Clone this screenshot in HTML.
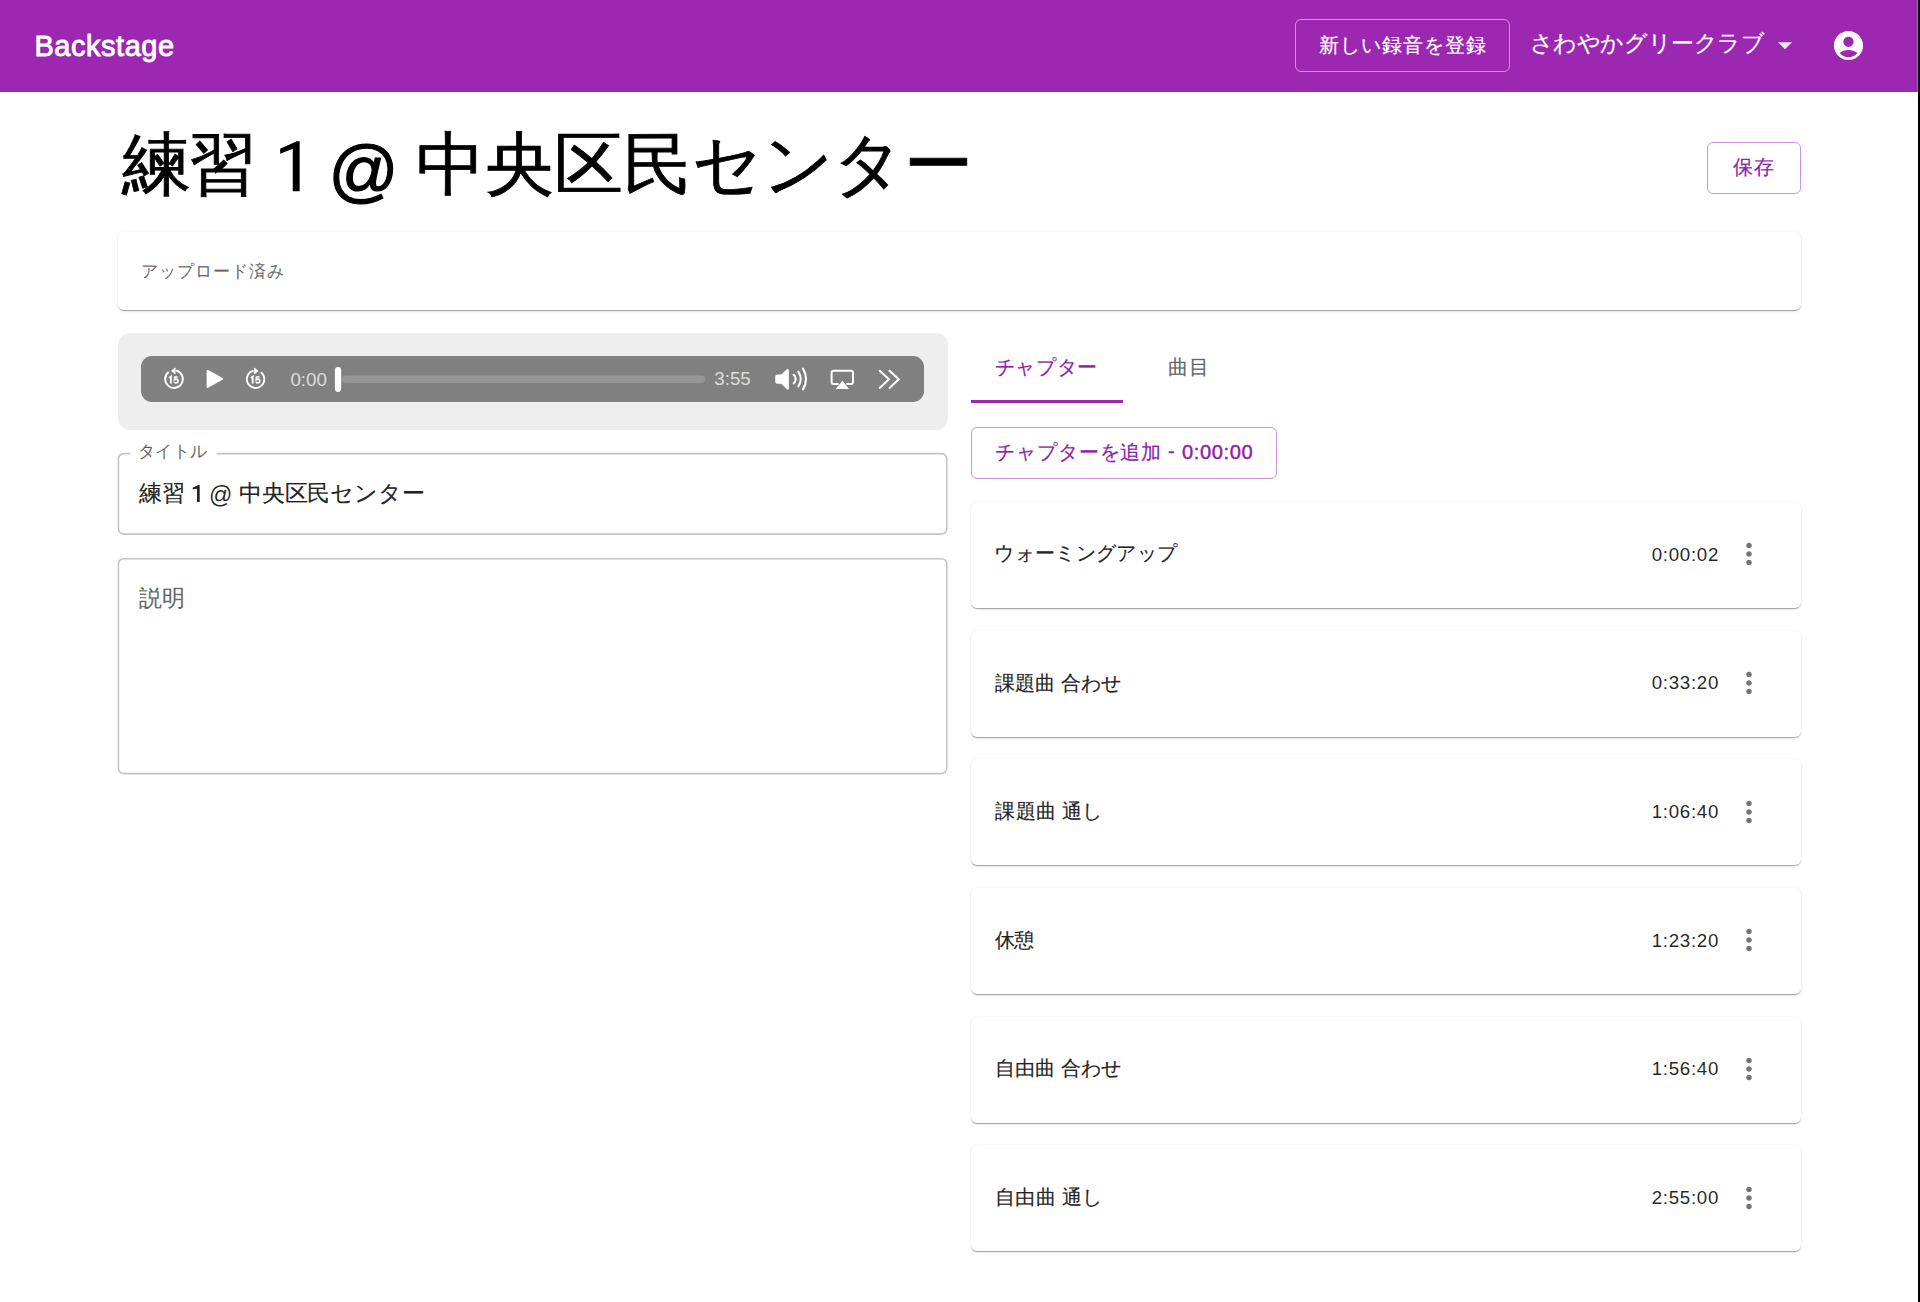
<!DOCTYPE html>
<html lang="ja">
<head>
<meta charset="utf-8">
<title>Backstage</title>
<style>
*{box-sizing:border-box;margin:0;padding:0}
html,body{width:1920px;height:1302px;overflow:hidden;background:#fff}
body{font-family:"Liberation Sans",sans-serif;color:rgba(0,0,0,0.87);position:relative}
.b{position:absolute}
.t{position:absolute;white-space:nowrap}
.paper{background:#fff;border-radius:6px;box-shadow:0px 2px 1px -1px rgba(0,0,0,0.2),0px 1px 1px 0px rgba(0,0,0,0.14),0px 1px 3px 0px rgba(0,0,0,0.12)}
.fld{border:2px solid #c4c4c4;border-radius:6.5px}
</style>
</head>
<body>
<div class="b" style="left:0;top:0;width:1920px;height:92px;background:#9c27b0"></div>
<div class="t" style="left:34.4px;top:23.55px;font-size:29px;line-height:44px;font-weight:400;letter-spacing:0.537px;color:#fff;-webkit-text-stroke:0.9px #fff">Backstage</div>
<div class="b" style="left:1295px;top:19px;width:215px;height:53px;border:1.4375px solid rgba(255,255,255,0.5);border-radius:6px"></div>
<div class="t" style="left:1318.5px;top:29.5px;font-size:20.125px;line-height:30px;font-weight:400;letter-spacing:1.071px;color:#fff;-webkit-text-stroke:0.2px #fff">新しい録音を登録</div>
<div class="t" style="left:1529.75px;top:26.27px;font-size:23px;line-height:34px;font-weight:400;letter-spacing:-0.45px;color:#fff;-webkit-text-stroke:0.2px #fff">さわやかグリークラブ</div>
<svg class="b" style="left:1768px;top:28px" width="34" height="34" viewBox="0 0 24 24"><path d="M7 10l5 5 5-5z" fill="#e6e6e6"/></svg>
<svg class="b" style="left:1831px;top:28px" width="35" height="35" viewBox="0 0 24 24"><path fill="#fff" d="M12 2C6.48 2 2 6.48 2 12s4.48 10 10 10 10-4.48 10-10S17.52 2 12 2zm0 4c1.93 0 3.5 1.57 3.5 3.5S13.93 13 12 13s-3.5-1.57-3.5-3.5S10.07 6 12 6zm0 14c-2.03 0-4.430-.82-6.14-2.88C7.55 15.8 9.68 15 12 15s4.45.8 6.14 2.12C16.43 19.18 14.03 20 12 20z"/></svg>
<div class="b" style="left:1917px;top:0;width:1px;height:92px;background:#b555c6"></div>
<div class="b" style="left:1918px;top:0;width:2px;height:1302px;background:#000"></div>
<div class="t" style="left:121.9px;top:112.9px;font-size:69px;line-height:104px;font-weight:400;letter-spacing:-2.4px;color:#000;-webkit-text-stroke:0.8px #000">練習</div>
<div class="t" style="left:328.5px;top:119.35px;font-size:69px;line-height:104px;font-weight:400;letter-spacing:0.0px;color:#000;-webkit-text-stroke:1.2px #000">@</div>
<div class="t" style="left:416.3px;top:112.6px;font-size:69px;line-height:104px;font-weight:400;letter-spacing:-0.157px;color:#000;-webkit-text-stroke:0.8px #000">中央区民センター</div>
<svg class="b" style="left:0;top:0" width="1920" height="600"><path fill="#000" d="M299.65 141.2 L299.65 191.27 L292.77 191.27 L292.77 148.65 L280.16 153.8 L280.16 148.65 L296.8 141.2 Z"/><path fill="rgba(0,0,0,0.87)" d="M199.69 485 L199.69 501.875 L197.03 501.875 L197.03 488.75 L192.66 489.2 L192.66 487.66 L198.44 485 Z"/></svg>
<div class="b" style="left:1707px;top:142px;width:94px;height:52px;border:1.4375px solid rgba(156,39,176,0.5);border-radius:6px"></div>
<div class="t" style="left:1733.3px;top:151.9px;font-size:20.125px;line-height:30px;font-weight:400;letter-spacing:0.7px;color:#8f1fab;-webkit-text-stroke:0.2px #8f1fab">保存</div>
<div class="b paper" style="left:118px;top:232px;width:1683px;height:78px"></div>
<div class="t" style="left:141.4px;top:258.0px;font-size:17.25px;line-height:26px;font-weight:400;letter-spacing:0.986px;color:rgba(0,0,0,0.6);-webkit-text-stroke:0.1px rgba(0,0,0,0.6)">アップロード済み</div>
<div class="b" style="left:118px;top:333px;width:830px;height:97px;background:#eeeeee;border-radius:12px"></div>
<div class="b" style="left:141px;top:356px;width:783px;height:46px;background:#808080;border-radius:11px"></div>
<svg id="player" class="b" style="left:141px;top:356px" width="783" height="46" viewBox="0 0 783 46"><path d="M35.14 14.51 A8.85 8.85 0 1 1 27.67 16.03" fill="none" stroke="#fff" stroke-width="1.85"/><path d="M30.40 14.90 L34.20 11.90 L34.20 17.90 Z" fill="#fff" stroke="#fff" stroke-width="0.7" stroke-linejoin="round"/><path d="M28.10 21.90 L29.90 20.60 L29.90 27.40" fill="none" stroke="#fff" stroke-width="1.9" stroke-linejoin="miter"/><path d="M36.80 21.00 L33.70 21.00 L33.40 23.90 Q34.40 23.10 35.20 23.10 Q37.00 23.10 37.00 25.00 Q37.00 26.90 35.10 26.90 Q33.80 26.90 33.10 26.00" fill="none" stroke="#fff" stroke-width="1.6"/><path d="M112.43 14.71 A8.75 8.75 0 1 0 119.82 16.21" fill="none" stroke="#fff" stroke-width="1.85"/><path d="M117.20 15.10 L113.40 12.00 L113.40 18.00 Z" fill="#fff" stroke="#fff" stroke-width="0.7" stroke-linejoin="round"/><path d="M109.90 21.90 L111.70 20.60 L111.70 27.40" fill="none" stroke="#fff" stroke-width="1.9" stroke-linejoin="miter"/><path d="M118.60 21.00 L115.50 21.00 L115.20 23.90 Q116.20 23.10 117.00 23.10 Q118.80 23.10 118.80 25.00 Q118.80 26.90 116.90 26.90 Q115.60 26.90 114.90 26.00" fill="none" stroke="#fff" stroke-width="1.6"/><path d="M66.6 14.9 L81.1 22.9 L66.6 30.9 Z" fill="#fff" stroke="#fff" stroke-width="2" stroke-linejoin="round"/><text x="149.4" y="29.5" style="font-family:'Liberation Sans';font-size:17.5px" fill="#dcdcdc" textLength="36.6" lengthAdjust="spacingAndGlyphs">0:00</text><rect x="201" y="19.5" width="363" height="7.5" rx="3.75" fill="#969696"/><rect x="193.9" y="11" width="6.3" height="25" rx="3.15" fill="#fff"/><text x="573.3" y="29.4" style="font-family:'Liberation Sans';font-size:17.5px" fill="#dcdcdc" textLength="36.4" lengthAdjust="spacingAndGlyphs">3:55</text><path d="M634.20 20.80 Q634.20 18.50 636.50 18.50 L640.20 18.50 L645.60 13.60 Q647.90 11.80 647.90 14.80 L647.90 31.80 Q647.90 34.80 645.60 33.00 L640.20 27.70 L636.50 27.70 Q634.20 27.70 634.20 25.40 Z" fill="#fff"/><path d="M652.70 18.80 A5.62 5.62 0 0 1 652.70 27.40" fill="none" stroke="#fff" stroke-width="2.1" stroke-linecap="round"/><path d="M657.30 15.60 A13.05 13.05 0 0 1 657.30 30.40" fill="none" stroke="#fff" stroke-width="2.1" stroke-linecap="round"/><path d="M662.00 12.60 A19.53 19.53 0 0 1 662.00 33.40" fill="none" stroke="#fff" stroke-width="2.1" stroke-linecap="round"/><path d="M697.5 28 L692.6 28 Q690.6 28 690.6 26 L690.6 16.8 Q690.6 14.8 692.6 14.8 L710 14.8 Q712 14.8 712 16.8 L712 26 Q712 28 710 28 L705.2 28" fill="none" stroke="#fff" stroke-width="2"/><path d="M701.35 24.7 L708 32.9 L694.7 32.9 Z" fill="#fff"/><path d="M738.7 14.8 L748 23.35 L738.7 31.9 M748.5 14.8 L757.8 23.35 L748.5 31.9" fill="none" stroke="#fff" stroke-width="2" stroke-linecap="round"/></svg>
<svg class="b" style="left:0;top:0" width="1000" height="800"><path d="M216.5 453.6 L940.8 453.6 Q946.8 453.6 946.8 459.6 L946.8 528.1 Q946.8 534.1 940.8 534.1 L124.4 534.1 Q118.4 534.1 118.4 528.1 L118.4 459.6 Q118.4 453.6 124.4 453.6 L130.4 453.6" fill="none" stroke="#c4c4c4" stroke-width="1.55"/><path d="M124.4 558.7 L940.8 558.7 Q946.8 558.7 946.8 564.7 L946.8 767.6 Q946.8 773.6 940.8 773.6 L124.4 773.6 Q118.4 773.6 118.4 767.6 L118.4 564.7 Q118.4 558.7 124.4 558.7 Z" fill="none" stroke="#c4c4c4" stroke-width="1.55"/></svg>
<div class="t" style="left:137.6px;top:437.5px;font-size:17.25px;line-height:26px;font-weight:400;letter-spacing:0.533px;color:rgba(0,0,0,0.6);-webkit-text-stroke:0.1px rgba(0,0,0,0.6)">タイトル</div>
<div class="t" style="left:138.9px;top:476.4px;font-size:23px;line-height:34px;font-weight:400;letter-spacing:0.0px;color:rgba(0,0,0,0.87);-webkit-text-stroke:0.2px rgba(0,0,0,0.87)">練習</div>
<div class="t" style="left:209.1px;top:478.15px;font-size:23px;line-height:34px;font-weight:400;letter-spacing:0.0px;color:rgba(0,0,0,0.87)">@</div>
<div class="t" style="left:238.8px;top:475.9px;font-size:23px;line-height:34px;font-weight:400;letter-spacing:-0.143px;color:rgba(0,0,0,0.87);-webkit-text-stroke:0.2px rgba(0,0,0,0.87)">中央区民センター</div>
<div class="t" style="left:139.4px;top:580.5px;font-size:23px;line-height:34px;font-weight:400;letter-spacing:0.0px;color:rgba(0,0,0,0.6);-webkit-text-stroke:0.2px rgba(0,0,0,0.6)">説明</div>
<div class="t" style="left:994.7px;top:351.8px;font-size:20.125px;line-height:30px;font-weight:400;letter-spacing:0.675px;color:#8f1fab;-webkit-text-stroke:0.2px #8f1fab">チャプター</div>
<div class="t" style="left:1167.5px;top:352.4px;font-size:20.125px;line-height:30px;font-weight:400;letter-spacing:1.0px;color:rgba(0,0,0,0.6);-webkit-text-stroke:0.2px rgba(0,0,0,0.6)">曲目</div>
<div class="b" style="left:971px;top:400px;width:152px;height:3px;background:#9c27b0"></div>
<div class="b" style="left:971px;top:427px;width:306px;height:52px;border:1.4375px solid rgba(156,39,176,0.5);border-radius:6px"></div>
<div class="t" style="left:995.4px;top:437.35px;font-size:20.125px;line-height:30px;font-weight:400;letter-spacing:0.843px;color:#8f1fab;-webkit-text-stroke:0.2px #8f1fab">チャプターを追加</div>
<div class="t" style="left:1168.0px;top:435.75px;font-size:20.125px;line-height:30px;font-weight:400;letter-spacing:0.0px;color:#8f1fab;-webkit-text-stroke:0.3px #8f1fab">-</div>
<div class="t" style="left:1181.9px;top:437.35px;font-size:20.125px;line-height:30px;font-weight:400;letter-spacing:0.617px;color:#8f1fab;-webkit-text-stroke:0.45px #8f1fab">0:00:00</div>
<div class="b paper" style="left:971px;top:501.9px;width:830px;height:106px"></div>
<div class="t" style="left:994.25px;top:538.45px;font-size:20.125px;line-height:30px;font-weight:400;letter-spacing:0.344px;color:rgba(0,0,0,0.87);-webkit-text-stroke:0.2px rgba(0,0,0,0.87)">ウォーミングアップ</div>
<div class="t" style="left:1651.7px;top:540.6px;font-size:18.7px;line-height:28px;font-weight:400;letter-spacing:0.717px;color:rgba(0,0,0,0.87)">0:00:02</div>
<svg class="b" style="left:1732px;top:537.3px" width="34" height="34" viewBox="0 0 24 24" fill="rgba(0,0,0,0.54)"><path d="M12 8c1.1 0 2-.9 2-2s-.9-2-2-2-2 .9-2 2 .9 2 2 2zm0 2c-1.1 0-2 .9-2 2s.9 2 2 2 2-.9 2-2-.9-2-2-2zm0 6c-1.1 0-2 .9-2 2s.9 2 2 2 2-.9 2-2-.9-2-2-2z"/></svg>
<div class="b paper" style="left:971px;top:630.57px;width:830px;height:106px"></div>
<div class="t" style="left:995.4px;top:667.5px;font-size:20.125px;line-height:30px;font-weight:400;letter-spacing:0.05px;color:rgba(0,0,0,0.87);-webkit-text-stroke:0.2px rgba(0,0,0,0.87)">課題曲 合わせ</div>
<div class="t" style="left:1651.7px;top:669.27px;font-size:18.7px;line-height:28px;font-weight:400;letter-spacing:0.717px;color:rgba(0,0,0,0.87)">0:33:20</div>
<svg class="b" style="left:1732px;top:665.97px" width="34" height="34" viewBox="0 0 24 24" fill="rgba(0,0,0,0.54)"><path d="M12 8c1.1 0 2-.9 2-2s-.9-2-2-2-2 .9-2 2 .9 2 2 2zm0 2c-1.1 0-2 .9-2 2s.9 2 2 2 2-.9 2-2-.9-2-2-2zm0 6c-1.1 0-2 .9-2 2s.9 2 2 2 2-.9 2-2-.9-2-2-2z"/></svg>
<div class="b paper" style="left:971px;top:759.24px;width:830px;height:106px"></div>
<div class="t" style="left:995.4px;top:796.25px;font-size:20.125px;line-height:30px;font-weight:400;letter-spacing:0.24px;color:rgba(0,0,0,0.87);-webkit-text-stroke:0.2px rgba(0,0,0,0.87)">課題曲 通し</div>
<div class="t" style="left:1651.7px;top:797.94px;font-size:18.7px;line-height:28px;font-weight:400;letter-spacing:0.717px;color:rgba(0,0,0,0.87)">1:06:40</div>
<svg class="b" style="left:1732px;top:794.64px" width="34" height="34" viewBox="0 0 24 24" fill="rgba(0,0,0,0.54)"><path d="M12 8c1.1 0 2-.9 2-2s-.9-2-2-2-2 .9-2 2 .9 2 2 2zm0 2c-1.1 0-2 .9-2 2s.9 2 2 2 2-.9 2-2-.9-2-2-2zm0 6c-1.1 0-2 .9-2 2s.9 2 2 2 2-.9 2-2-.9-2-2-2z"/></svg>
<div class="b paper" style="left:971px;top:887.91px;width:830px;height:106px"></div>
<div class="t" style="left:994.6px;top:924.6px;font-size:20.125px;line-height:30px;font-weight:400;letter-spacing:-0.4px;color:rgba(0,0,0,0.87);-webkit-text-stroke:0.2px rgba(0,0,0,0.87)">休憩</div>
<div class="t" style="left:1651.7px;top:926.61px;font-size:18.7px;line-height:28px;font-weight:400;letter-spacing:0.717px;color:rgba(0,0,0,0.87)">1:23:20</div>
<svg class="b" style="left:1732px;top:923.31px" width="34" height="34" viewBox="0 0 24 24" fill="rgba(0,0,0,0.54)"><path d="M12 8c1.1 0 2-.9 2-2s-.9-2-2-2-2 .9-2 2 .9 2 2 2zm0 2c-1.1 0-2 .9-2 2s.9 2 2 2 2-.9 2-2-.9-2-2-2zm0 6c-1.1 0-2 .9-2 2s.9 2 2 2 2-.9 2-2-.9-2-2-2z"/></svg>
<div class="b paper" style="left:971px;top:1016.58px;width:830px;height:106px"></div>
<div class="t" style="left:995.1px;top:1053.12px;font-size:20.125px;line-height:30px;font-weight:400;letter-spacing:0.1px;color:rgba(0,0,0,0.87);-webkit-text-stroke:0.2px rgba(0,0,0,0.87)">自由曲 合わせ</div>
<div class="t" style="left:1651.7px;top:1055.28px;font-size:18.7px;line-height:28px;font-weight:400;letter-spacing:0.717px;color:rgba(0,0,0,0.87)">1:56:40</div>
<svg class="b" style="left:1732px;top:1051.98px" width="34" height="34" viewBox="0 0 24 24" fill="rgba(0,0,0,0.54)"><path d="M12 8c1.1 0 2-.9 2-2s-.9-2-2-2-2 .9-2 2 .9 2 2 2zm0 2c-1.1 0-2 .9-2 2s.9 2 2 2 2-.9 2-2-.9-2-2-2zm0 6c-1.1 0-2 .9-2 2s.9 2 2 2 2-.9 2-2-.9-2-2-2z"/></svg>
<div class="b paper" style="left:971px;top:1145.25px;width:830px;height:106px"></div>
<div class="t" style="left:995.0px;top:1181.95px;font-size:20.125px;line-height:30px;font-weight:400;letter-spacing:0.28px;color:rgba(0,0,0,0.87);-webkit-text-stroke:0.2px rgba(0,0,0,0.87)">自由曲 通し</div>
<div class="t" style="left:1651.7px;top:1183.95px;font-size:18.7px;line-height:28px;font-weight:400;letter-spacing:0.717px;color:rgba(0,0,0,0.87)">2:55:00</div>
<svg class="b" style="left:1732px;top:1180.65px" width="34" height="34" viewBox="0 0 24 24" fill="rgba(0,0,0,0.54)"><path d="M12 8c1.1 0 2-.9 2-2s-.9-2-2-2-2 .9-2 2 .9 2 2 2zm0 2c-1.1 0-2 .9-2 2s.9 2 2 2 2-.9 2-2-.9-2-2-2zm0 6c-1.1 0-2 .9-2 2s.9 2 2 2 2-.9 2-2-.9-2-2-2z"/></svg>
</body>
</html>
